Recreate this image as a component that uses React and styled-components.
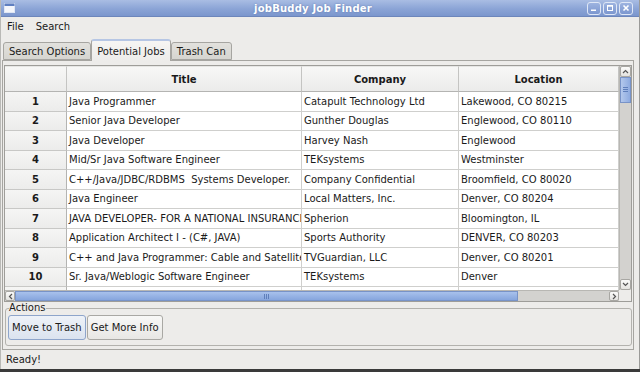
import React from "react";
import styled, { createGlobalStyle } from "styled-components";

const GlobalStyle = createGlobalStyle`
  html, body {
    margin: 0;
    padding: 0;
    background: #3a3a3a;
  }
  * {
    box-sizing: border-box;
  }
`;

const jobs = [
  ["Java Programmer", "Catapult Technology Ltd", "Lakewood, CO 80215"],
  ["Senior Java Developer", "Gunther Douglas", "Englewood, CO 80110"],
  ["Java Developer", "Harvey Nash", "Englewood"],
  ["Mid/Sr Java Software Engineer", "TEKsystems", "Westminster"],
  ["C++/Java/JDBC/RDBMS  Systems Developer.", "Company Confidential", "Broomfield, CO 80020"],
  ["Java Engineer", "Local Matters, Inc.", "Denver, CO 80204"],
  ["JAVA DEVELOPER- FOR A NATIONAL INSURANCE", "Spherion", "Bloomington, IL"],
  ["Application Architect I - (C#, JAVA)", "Sports Authority", "DENVER, CO 80203"],
  ["C++ and Java Programmer: Cable and Satellite", "TVGuardian, LLC", "Denver, CO 80201"],
  ["Sr. Java/Weblogic Software Engineer", "TEKsystems", "Denver"],
  ["", "", ""],
];

export default function App() {
  return (
    <>
      <GlobalStyle />
      <Window>
        <TitleBar>
          <AppIcon viewBox="0 0 11 10">
            <rect x="0.5" y="0.5" width="10" height="9" fill="#f4f6fb" stroke="#dfe6f4" />
            <rect x="0.5" y="0.5" width="10" height="2.5" fill="#5f7fc0" />
          </AppIcon>
          <TitleText>jobBuddy Job Finder</TitleText>
          <WinButtons>
            <WinButton>
              <svg width="8" height="8" viewBox="0 0 8 8">
                <rect x="1" y="5.5" width="5" height="1.5" fill="#fff" />
              </svg>
            </WinButton>
            <WinButton>
              <svg width="8" height="8" viewBox="0 0 8 8">
                <rect x="1.5" y="1.5" width="5" height="5" fill="none" stroke="#fff" />
                <rect x="1.5" y="1.5" width="5" height="1.2" fill="#fff" />
              </svg>
            </WinButton>
            <WinButton>
              <svg width="8" height="8" viewBox="0 0 8 8">
                <path d="M1.5 1.5 L6.5 6.5 M6.5 1.5 L1.5 6.5" stroke="#fff" strokeWidth="1.6" />
              </svg>
            </WinButton>
          </WinButtons>
        </TitleBar>

        <MenuBar>
          <MenuItem>File</MenuItem>
          <MenuItem>Search</MenuItem>
        </MenuBar>

        <TabArea>
          <TabRow>
            <Tab>Search Options</Tab>
            <Tab $active>Potential Jobs</Tab>
            <Tab>Trash Can</Tab>
          </TabRow>
          <Pane>
            <TableFrame>
              <TableMain>
                <Viewport>
                  <HeaderRow>
                    <HeadCell />
                    <HeadCell>Title</HeadCell>
                    <HeadCell>Company</HeadCell>
                    <HeadCell>Location</HeadCell>
                  </HeaderRow>
                  {jobs.map((job, i) => (
                    <Row key={i}>
                      <RowHead>{job[0] ? i + 1 : ""}</RowHead>
                      {job.map((text, j) => (
                        <Cell key={j}>{text}</Cell>
                      ))}
                    </Row>
                  ))}
                </Viewport>
                <VScroll>
                  <ArrowBox $v>
                    <svg width="7" height="5" viewBox="0 0 7 5">
                      <path d="M1 4 L3.5 1.5 L6 4" fill="none" stroke="#555" strokeWidth="1.2" />
                    </svg>
                  </ArrowBox>
                  <VThumb>
                    <Grip $v />
                  </VThumb>
                  <Track />
                  <ArrowBox $v>
                    <svg width="7" height="5" viewBox="0 0 7 5">
                      <path d="M1 1 L3.5 3.5 L6 1" fill="none" stroke="#555" strokeWidth="1.2" />
                    </svg>
                  </ArrowBox>
                </VScroll>
              </TableMain>
              <HScrollRow>
                <HScroll>
                  <ArrowBox>
                    <svg width="5" height="7" viewBox="0 0 5 7">
                      <path d="M4 1 L1.5 3.5 L4 6" fill="none" stroke="#555" strokeWidth="1.2" />
                    </svg>
                  </ArrowBox>
                  <HThumb>
                    <Grip />
                  </HThumb>
                  <Track />
                  <ArrowBox>
                    <svg width="5" height="7" viewBox="0 0 5 7">
                      <path d="M1 1 L3.5 3.5 L1 6" fill="none" stroke="#555" strokeWidth="1.2" />
                    </svg>
                  </ArrowBox>
                </HScroll>
                <Corner />
              </HScrollRow>
            </TableFrame>

            <Group>
              <Legend>Actions</Legend>
              <Button $focus>Move to Trash</Button>
              <Button>Get More Info</Button>
            </Group>
          </Pane>
        </TabArea>

        <StatusBar>Ready!</StatusBar>
      </Window>
    </>
  );
}

const Window = styled.div`
  width: 640px;
  height: 369px;
  display: flex;
  flex-direction: column;
  background: #edecea;
  border-left: 1px solid #b9b9b6;
  border-right: 1px solid #9a9a98;
  font-family: "DejaVu Sans", "Liberation Sans", sans-serif;
  font-size: 10px;
  color: #1a1a1a;
  overflow: hidden;
`;

const TitleBar = styled.div`
  height: 17px;
  flex: none;
  display: flex;
  align-items: center;
  padding: 0 6px 0 3px;
  background: linear-gradient(#a9bde3, #8ba4d6 55%, #7b96cd);
  border-bottom: 1px solid #6d86bb;
`;

const AppIcon = styled.svg`
  width: 11px;
  height: 10px;
  flex: none;
`;

const TitleText = styled.div`
  flex: 1;
  text-align: center;
  color: #fff;
  font-weight: bold;
  font-size: 10px;
  letter-spacing: 0.2px;
  text-shadow: 0 0 2px #5f78ad;
  padding-left: 24px;
`;

const WinButtons = styled.div`
  display: flex;
  gap: 2px;
`;

const WinButton = styled.div`
  width: 14px;
  height: 13px;
  border: 1px solid #dfe7f6;
  border-radius: 3px;
  background: linear-gradient(#9db3e0, #7c97cf);
  display: flex;
  align-items: center;
  justify-content: center;
`;

const MenuBar = styled.div`
  height: 19px;
  flex: none;
  display: flex;
  align-items: center;
  padding: 0 0 0 6px;
  gap: 12px;
`;

const MenuItem = styled.div`
  padding: 0;
`;

const TabArea = styled.div`
  flex: 1;
  display: flex;
  flex-direction: column;
  padding: 3px 5px 0 1px;
`;

const TabRow = styled.div`
  display: flex;
  align-items: flex-end;
  height: 21px;
  padding-left: 1px;
  position: relative;
  z-index: 1;
`;

const Tab = styled.div`
  height: ${(p) => (p.$active ? "22px" : "18px")};
  margin-bottom: ${(p) => (p.$active ? "-1px" : "0")};
  padding: 0 5px;
  display: flex;
  align-items: center;
  border: 1px solid #a6a5a1;
  border-bottom: ${(p) => (p.$active ? "none" : "1px solid #a6a5a1")};
  border-radius: 3px 3px 0 0;
  background: ${(p) =>
    p.$active ? "linear-gradient(#f6f5f3, #edecea)" : "linear-gradient(#e2e1dd, #d6d5d0)"};
  border-top: ${(p) => (p.$active ? "2px solid #b6c6e4" : "1px solid #a6a5a1")};
`;

const Pane = styled.div`
  flex: 1;
  display: flex;
  flex-direction: column;
  border: 1px solid #a6a5a1;
  padding: 4px 1px 3px 1px;
`;

const TableFrame = styled.div`
  height: 237px;
  flex: none;
  display: flex;
  flex-direction: column;
  border: 1px solid #9e9d99;
  background: #fff;
`;

const TableMain = styled.div`
  flex: 1;
  display: flex;
  min-height: 0;
`;

const Viewport = styled.div`
  width: 614px;
  overflow: hidden;
  background: #fff;
`;

const columns = "62px 235px 157px 160px";

const HeaderRow = styled.div`
  display: grid;
  grid-template-columns: ${columns};
  height: 26px;
`;

const HeadCell = styled.div`
  display: flex;
  align-items: center;
  justify-content: center;
  font-weight: bold;
  background: linear-gradient(#f7f7f6, #ebebea);
  border-right: 1px solid #c4c4c2;
  border-bottom: 1px solid #b4b4b2;
  border-top: 1px solid #e6e6e4;
`;

const Row = styled.div`
  display: grid;
  grid-template-columns: ${columns};
  height: 19.5px;
`;

const RowHead = styled.div`
  display: flex;
  align-items: center;
  justify-content: center;
  font-weight: bold;
  background: linear-gradient(#f5f5f4, #ececeb);
  border-right: 1px solid #b4b4b2;
  border-bottom: 1px solid #c8c8c6;
`;

const Cell = styled.div`
  display: flex;
  align-items: center;
  padding-left: 2px;
  white-space: pre;
  overflow: hidden;
  border-right: 1px solid #cfcfcd;
  border-bottom: 1px solid #cfcfcd;
`;

const VScroll = styled.div`
  width: 12px;
  flex: none;
  display: flex;
  flex-direction: column;
  background: #d3d2cf;
  border-left: 1px solid #b8b7b3;
`;

const HScrollRow = styled.div`
  height: 11px;
  flex: none;
  display: flex;
`;

const HScroll = styled.div`
  flex: 1;
  display: flex;
  background: #d3d2cf;
  border-top: 1px solid #b8b7b3;
`;

const Corner = styled.div`
  width: 12px;
  background: #edecea;
`;

const ArrowBox = styled.div`
  width: ${(p) => (p.$v ? "11px" : "10px")};
  height: ${(p) => (p.$v ? "11px" : "10px")};
  flex: none;
  display: flex;
  align-items: center;
  justify-content: center;
  background: linear-gradient(#fbfbfa, #e4e3e0);
  border: 1px solid #a8a7a3;
  border-radius: 2px;
`;

const Track = styled.div`
  flex: 1;
`;

const VThumb = styled.div`
  height: 26px;
  flex: none;
  display: flex;
  align-items: center;
  justify-content: center;
  background: linear-gradient(90deg, #b3c8ec, #8eabe0);
  border: 1px solid #7893c7;
`;

const HThumb = styled.div`
  width: 503px;
  flex: none;
  display: flex;
  align-items: center;
  justify-content: center;
  background: linear-gradient(#a8c1ec, #86a5dd);
  border: 1px solid #7893c7;
`;

const Grip = styled.div`
  width: ${(p) => (p.$v ? "5px" : "6px")};
  height: ${(p) => (p.$v ? "6px" : "5px")};
  background: ${(p) =>
    p.$v
      ? "repeating-linear-gradient(#5f7fbb 0 1px, transparent 1px 2px)"
      : "repeating-linear-gradient(90deg, #5f7fbb 0 1px, transparent 1px 2px)"};
`;

const Group = styled.fieldset`
  margin: 1px 0 0 1px;
  padding: 2px 2px 2px 2px;
  border: 1px solid #b3b2ae;
  border-radius: 3px;
  display: flex;
  gap: 1px;
  height: 43px;
  min-width: 0;
`;

const Legend = styled.legend`
  padding: 0;
  margin-left: 1px;
  font-size: 10px;
  line-height: 10px;
`;

const Button = styled.button`
  height: 25px;
  padding: 0 3px;
  font-family: "DejaVu Sans", "Liberation Sans", sans-serif;
  font-size: 10px;
  color: #1a1a1a;
  border-radius: 3px;
  border: 1px solid ${(p) => (p.$focus ? "#8ea5cb" : "#a9a8a4")};
  background: ${(p) =>
    p.$focus ? "linear-gradient(#eef2f8, #dbe3ef)" : "linear-gradient(#f8f8f7, #e8e7e4)"};
`;

const StatusBar = styled.div`
  flex: none;
  height: 20px;
  display: flex;
  align-items: center;
  padding-left: 5px;
  border-bottom: 1px solid #c9c8c4;
  margin-bottom: 1px;
`;
